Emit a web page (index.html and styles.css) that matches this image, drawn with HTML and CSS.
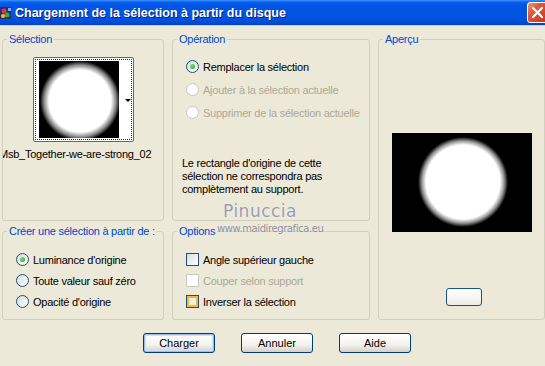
FILE: index.html
```html
<!DOCTYPE html>
<html lang="fr">
<head>
    <meta charset="UTF-8">
    <title>Chargement de la sélection à partir du disque</title>
    <link rel="stylesheet" href="styles.css">
</head>
<body>
    <div class="window">
        <!-- barre de titre -->
        <div class="titlebar">
            <svg class="appicon" width="12" height="14" viewBox="0 0 12 14">
                <rect x="0" y="1" width="11" height="12" fill="#2b2b6e"/>
                <circle cx="4" cy="5" r="2.5" fill="#e0304a"/>
                <circle cx="7" cy="9" r="2.5" fill="#2fae3c"/>
                <circle cx="3" cy="10" r="2" fill="#f2c230"/>
                <rect x="8" y="2" width="3" height="3" fill="#6fb0ff"/>
            </svg>
            <span class="title">Chargement de la sélection à partir du disque</span>
            <div class="close">
                <svg width="13" height="13" viewBox="0 0 13 13">
                    <path d="M2 2 L11 11 M11 2 L2 11" stroke="#fff" stroke-width="2.2" stroke-linecap="round"/>
                </svg>
            </div>
        </div>

        <div class="panels">
            <fieldset class="group sel">
                <legend>Sélection</legend>
                <div class="thumb">
                    <div class="thumb-focus">
                        <div class="thumb-img"></div>
                        <div class="thumb-strip"><span class="arrow"></span></div>
                    </div>
                </div>
                <div class="filename"><span>Msb_Together-we-are-strong_02</span></div>
            </fieldset>

            <fieldset class="group op">
                <legend>Opération</legend>
                <div class="choices">
                    <label class="row"><span class="radio checked"></span>Remplacer la sélection</label>
                    <label class="row disabled"><span class="radio"></span>Ajouter à la sélection actuelle</label>
                    <label class="row disabled"><span class="radio"></span>Supprimer de la sélection actuelle</label>
                </div>
                <p class="note">Le rectangle d'origine de cette sélection ne correspondra pas complètement au support.</p>
            </fieldset>

            <fieldset class="group preview">
                <legend>Aperçu</legend>
                <div class="preview-img"></div>
                <div class="zoom-btn"></div>
            </fieldset>

            <fieldset class="group create">
                <legend>Créer une sélection à partir de :</legend>
                <div class="choices tight">
                    <label class="row"><span class="radio checked"></span>Luminance d'origine</label>
                    <label class="row"><span class="radio"></span>Toute valeur sauf zéro</label>
                    <label class="row"><span class="radio"></span>Opacité d'origine</label>
                </div>
            </fieldset>

            <fieldset class="group options">
                <legend>Options</legend>
                <div class="choices tight">
                    <label class="row"><span class="check"></span>Angle supérieur gauche</label>
                    <label class="row disabled"><span class="check"></span>Couper selon support</label>
                    <label class="row"><span class="check hover"></span>Inverser la sélection</label>
                </div>
            </fieldset>
        </div>

        <div class="actions">
            <button class="btn default">Charger</button>
            <button class="btn">Annuler</button>
            <button class="btn">Aide</button>
        </div>

        <!-- filigrane -->
        <div class="watermark">
            <span class="wm-name">Pinuccia</span>
            <span class="wm-site">www.maidiregrafica.eu</span>
        </div>
    </div>
</body>
</html>
```

FILE: styles.css
```css
* {
    margin: 0;
    padding: 0;
    box-sizing: border-box;
}

body {
    width: 545px;
    height: 366px;
    overflow: hidden;
    background: #ECE9D8;
    font-family: "Liberation Sans", Arial, sans-serif;
    font-size: 11px;
    letter-spacing: -0.25px;
    color: #000;
}

.window {
    position: relative;
    height: 366px;
}

/* barre de titre */
.titlebar {
    height: 26px;
    display: flex;
    align-items: center;
    background: linear-gradient(#3d95ff 0, #0a5fef 2px, #0055e5 5px, #0053e3 18px, #0049d6 23px, #003dbd 26px);
    border-bottom: 1px solid #c8d4e8;
}

.appicon {
    margin-right: 3px;
}

.title {
    color: #fff;
    font-family: "Liberation Sans", Arial, sans-serif;
    font-weight: bold;
    font-size: 12.5px;
    letter-spacing: 0;
    text-shadow: 1px 1px 0 #0a1e6a;
    flex: 1;
}

.close {
    width: 21px;
    height: 21px;
    margin-right: -3px;
    border: 1px solid #fff;
    border-radius: 3px;
    background: linear-gradient(135deg, #f09a7c 0, #e0583c 35%, #c4341c 100%);
    display: flex;
    align-items: center;
    justify-content: center;
}

/* panneaux */
.panels {
    display: grid;
    grid-template-columns: 162px 198px 167px;
    grid-template-rows: 188px 95px;
    column-gap: 8px;
    row-gap: 4px;
    margin-top: 7px;
    padding-left: 2px;
}

.group {
    border: 1px solid #D0D0BF;
    border-radius: 3px;
    min-width: 0;
    padding: 0;
}

.group legend {
    color: #0046D5;
    margin-left: 4px;
    padding: 0 2px;
    line-height: 13px;
    white-space: nowrap;
}

.sel { grid-column: 1; grid-row: 1; }
.op { grid-column: 2; grid-row: 1; }
.preview { grid-column: 3; grid-row: 1 / span 2; }
.create { grid-column: 1; grid-row: 2; }
.options { grid-column: 2; grid-row: 2; }

/* vignette */
.thumb {
    width: 101px;
    height: 85px;
    margin: 11px 0 0 30px;
    border: 1px solid #3c6ea8;
    border-radius: 2px;
    background: #fff;
    padding: 1px;
}

.thumb-focus {
    height: 100%;
    border: 1px dotted #333;
    display: flex;
    padding: 1px 0 1px 3px;
}

.thumb-img {
    width: 80px;
    background: radial-gradient(circle at 41px 40px, #fff 0, #fff 31px, #888 36px, #000 40px);
}

.thumb-strip {
    flex: 1;
    position: relative;
}

.arrow {
    position: absolute;
    right: 0;
    top: 38px;
    border-left: 3px solid transparent;
    border-right: 3px solid transparent;
    border-top: 3px solid #000;
}

.filename {
    width: 151px;
    overflow: hidden;
    white-space: nowrap;
    margin-top: 6px;
    line-height: 13px;
}

.filename span {
    display: inline-block;
    margin-left: -4px;
}

/* boutons radio / cases */
.choices {
    display: flex;
    flex-direction: column;
    gap: 10px;
    padding: 14px 0 0 13px;
}

.choices.tight {
    gap: 8px;
    padding-top: 15px;
}

.row {
    display: flex;
    align-items: center;
    gap: 4px;
    height: 13px;
}

.row.disabled {
    color: #ACA899;
}

.radio {
    width: 13px;
    height: 13px;
    border-radius: 50%;
    border: 1px solid #1C5180;
    background: linear-gradient(135deg, #DCDCD7, #fff);
    display: flex;
    align-items: center;
    justify-content: center;
}

.radio.checked::after {
    content: "";
    width: 5px;
    height: 5px;
    border-radius: 50%;
    background: radial-gradient(circle at 35% 35%, #7be07b, #21A121);
}

.disabled .radio,
.disabled .check {
    border-color: #CAC8BB;
    background: #fff;
}

.check {
    width: 13px;
    height: 13px;
    border: 1px solid #1C5180;
    background: linear-gradient(135deg, #DCDCD7, #fff);
}

.check.hover {
    box-shadow: inset 0 0 0 2px #F8B636;
    background: #f2efe4;
}

.note {
    line-height: 13px;
    margin: 38px 8px 0 9px;
}

/* aperçu */
.preview-img {
    width: 140px;
    height: 99px;
    margin: 87px 0 0 13px;
    background: radial-gradient(circle at 71px 49px, #fff 0, #fff 37px, #999 41px, #000 45px);
}

.zoom-btn {
    width: 36px;
    height: 18px;
    margin: 56px 0 0 67px;
    border: 1px solid #1C5180;
    border-radius: 3px;
    background: linear-gradient(#fff, #ECEBE6);
}

/* boutons */
.actions {
    display: flex;
    gap: 26px;
    padding-left: 143px;
    margin-top: 13px;
}

.btn {
    width: 72px;
    height: 20px;
    border: 1px solid #003C74;
    border-radius: 3px;
    background: linear-gradient(#fff, #f3f2ec 60%, #d6d0c5);
    font-family: "Liberation Sans", Arial, sans-serif;
    font-size: 11px;
    color: #000;
}

.btn.default {
    box-shadow: inset 0 0 0 1px #9dbbef, inset 0 0 0 2px #cee0fb;
}

/* filigrane */
.watermark {
    position: absolute;
    left: 217px;
    top: 201px;
    display: flex;
    flex-direction: column;
    pointer-events: none;
    letter-spacing: 0;
}

.wm-name {
    font-family: "DejaVu Sans", sans-serif;
    font-size: 17px;
    letter-spacing: 0.5px;
    color: #9b9bb0;
    margin-left: 6px;
    text-shadow: 0 0 1px #fff;
}

.wm-site {
    font-family: "DejaVu Sans", sans-serif;
    font-size: 10px;
    letter-spacing: -0.4px;
    color: #8c8c98;
    margin-top: 2px;
    text-shadow: 0 0 1px #fff;
}
```
